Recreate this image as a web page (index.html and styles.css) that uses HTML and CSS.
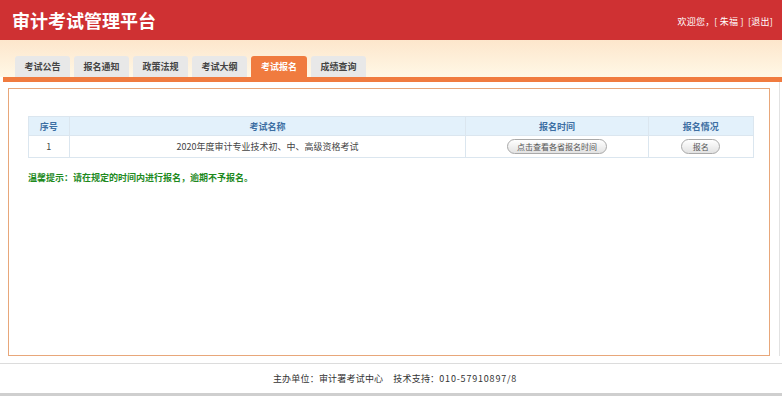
FILE: index.html
```html
<!DOCTYPE html>
<html lang="zh-CN">
<head>
    <meta charset="UTF-8">
    <meta name="viewport" content="width=device-width, initial-scale=1.0">
    <title>审计考试管理平台</title>
    <link rel="stylesheet" href="styles.css">
</head>
<body>
    <div class="page">
        <header class="top">
            <h1>审计考试管理平台</h1>
            <div class="user">欢迎您，[ 朱福 ]&nbsp;&nbsp;<a href="#">[退出]</a></div>
        </header>

        <nav class="tabs">
            <ul>
                <li><a href="#">考试公告</a></li>
                <li><a href="#">报名通知</a></li>
                <li><a href="#">政策法规</a></li>
                <li><a href="#">考试大纲</a></li>
                <li class="active"><a href="#">考试报名</a></li>
                <li><a href="#">成绩查询</a></li>
            </ul>
        </nav>
        <div class="tab-line"></div>

        <main>
            <div class="box">
                <table class="list">
                    <thead>
                        <tr>
                            <th class="col-no">序号</th>
                            <th class="col-name">考试名称</th>
                            <th class="col-time">报名时间</th>
                            <th class="col-state">报名情况</th>
                        </tr>
                    </thead>
                    <tbody>
                        <tr>
                            <td>1</td>
                            <td>2020年度审计专业技术初、中、高级资格考试</td>
                            <td><button class="pill wide">点击查看各省报名时间</button></td>
                            <td><button class="pill">报名</button></td>
                        </tr>
                    </tbody>
                </table>
                <p class="tip">温馨提示：请在规定的时间内进行报名，逾期不予报名。</p>
            </div>
        </main>

        <footer>
            <p>主办单位：审计署考试中心<span class="sep"></span>技术支持：<span class="tel">010-57910897/8</span></p>
        </footer>
    </div>
</body>
</html>
```

FILE: styles.css
```css
body {
    font-family: "Noto Sans CJK SC", "Liberation Sans", sans-serif;
    margin: 0;
    padding: 0;
    background-color: #fff;
    color: #333;
}
.page {
    height: 396px;
    display: flex;
    flex-direction: column;
    box-sizing: border-box;
    border-bottom: 3px solid #cfcfcf;
}
.top {
    height: 40px;
    background-color: #cf3133;
    display: flex;
    justify-content: space-between;
    align-items: center;
    padding: 0 9px 0 12px;
}
.top h1 {
    margin: 0;
    font-size: 18px;
    line-height: 1;
    color: #fff;
    font-weight: bold;
}
.user {
    font-size: 9px;
    color: #fff;
    padding-top: 2px;
    letter-spacing: 0.2px;
}
.user a {
    color: #fff;
    text-decoration: none;
}
.tabs {
    height: 37px;
    background: linear-gradient(#fde6cc, #fff8e6);
    display: flex;
    align-items: flex-end;
}
.tabs ul {
    list-style-type: none;
    margin: 0 0 0 15px;
    padding: 0;
    display: flex;
    gap: 4px;
}
.tabs li {
    width: 55px;
    height: 21px;
    background-color: #e8e8e8;
    border-radius: 3px 3px 0 0;
    display: flex;
    justify-content: center;
    align-items: center;
}
.tabs li a {
    font-size: 9px;
    font-weight: bold;
    color: #444;
    text-decoration: none;
}
.tabs li.active {
    width: 56px;
    background-color: #f07b3f;
}
.tabs li.active a {
    color: #fff;
}
.tab-line {
    height: 5px;
    margin-left: 3px;
    background-color: #f07b3f;
}
main {
    padding: 6px 9px 0 8px;
    border-right: 1px solid #e2e2e2;
    margin-right: 2px;
}
.box {
    height: 268px;
    box-sizing: border-box;
    border: 1px solid #e8a77a;
    padding: 27px 18px 0 19px;
}
.list {
    width: 726px;
    border-collapse: collapse;
    font-size: 9px;
}
.list th, .list td {
    border: 1px solid #dbe6ef;
    text-align: center;
    padding: 0;
}
.list th {
    height: 18px;
    background-color: #e3f1fb;
    color: #3d6fa3;
    font-weight: bold;
}
.list td {
    height: 21px;
    color: #444;
}
.col-no { width: 40px; }
.col-name { width: 399px; }
.col-time { width: 182px; }
.col-state { width: 105px; }
.pill {
    font-family: inherit;
    font-size: 8px;
    color: #555;
    height: 15px;
    width: 39px;
    padding: 0;
    border: 1px solid #a9a9a9;
    border-radius: 8px;
    background: linear-gradient(#ffffff, #e2e2e2);
    line-height: 13px;
}
.pill.wide {
    width: 100px;
}
.tip {
    margin: 13px 0 0;
    font-size: 9px;
    font-weight: bold;
    color: #1e8a1e;
}
footer {
    flex: 1;
    margin-top: 7px;
    border-top: 1px solid #dcdcdc;
    display: flex;
    justify-content: center;
    align-items: center;
}
footer p {
    margin: 0 0 0 8px;
    font-size: 9px;
    color: #333;
    letter-spacing: 0.2px;
}
.tel {
    letter-spacing: 0.8px;
}
.sep {
    display: inline-block;
    width: 10px;
}
```
